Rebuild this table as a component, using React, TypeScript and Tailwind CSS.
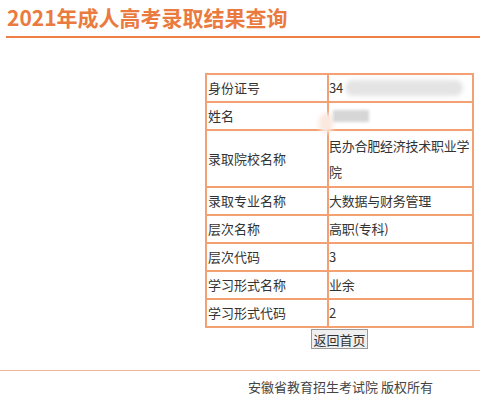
import React from "react";

const rows: { k: string; v: React.ReactNode; tall?: boolean }[] = [
  {
    k: "身份证号",
    v: (
      <div className="flex items-center">
        <span>34</span>
        <span className="ml-[2px] inline-block h-[16px] w-[118px] rounded-full bg-[#e4e4e4] blur-[2px]" />
      </div>
    ),
  },
  {
    k: "姓名",
    v: (
      <div className="relative flex items-center">
        <span className="absolute left-[-10px] top-[3px] inline-block h-[20px] w-[14px] rounded-full bg-[#fbe9e0] blur-[2px]" />
        <span className="relative ml-[4px] inline-block h-[12px] w-[36px] bg-[#d6d6d6] blur-[1.5px]" />
      </div>
    ),
  },
  { k: "录取院校名称", v: "民办合肥经济技术职业学院", tall: true },
  { k: "录取专业名称", v: "大数据与财务管理" },
  { k: "层次名称", v: "高职(专科)" },
  { k: "层次代码", v: "3" },
  { k: "学习形式名称", v: "业余" },
  { k: "学习形式代码", v: "2" },
];

export default function App() {
  return (
    <div
      className="relative h-[400px] w-[480px] overflow-hidden bg-white text-[#333]"
      style={{ fontFamily: '"Noto Sans CJK SC", "Noto Sans", sans-serif' }}
    >
      <div className="pl-[6px] pt-[2px]">
        <h1 className="h-[32px] pl-[1px] text-[21px] font-bold leading-[30px] text-[#ea7a3e]">
          2021年成人高考录取结果查询
        </h1>
        <div className="mt-[2px] h-[2px] bg-[#ec8045]" />
      </div>

      <div className="ml-[205px] mt-[35px] flex w-[269px] flex-col items-center">
        <table className="w-[269px] table-fixed border-collapse text-[13px] leading-[26px]">
          <tbody>
            {rows.map((r) => (
              <tr key={r.k} className={r.tall ? "h-[57px]" : "h-[27px]"}>
                <td className="w-[122px] border-2 border-[#f3a172] p-0 pl-[1px] align-middle">{r.k}</td>
                <td className="border-2 border-[#f3a172] p-0 align-middle tracking-[-0.25px]">{r.v}</td>
              </tr>
            ))}
          </tbody>
        </table>
        <button className="mt-[1px] h-[20px] border border-[#9a9a9a] bg-[#efefef] px-[1px] text-[13px] leading-[17px] text-[#333]">
          返回首页
        </button>
      </div>

      <div className="absolute left-0 right-0 top-[370px] h-[1px] bg-[#f1b4a0]" />
      <div className="absolute left-[248px] top-[378px] text-[13px] leading-[18px] text-[#444]">
        安徽省教育招生考试院 版权所有
      </div>
    </div>
  );
}
